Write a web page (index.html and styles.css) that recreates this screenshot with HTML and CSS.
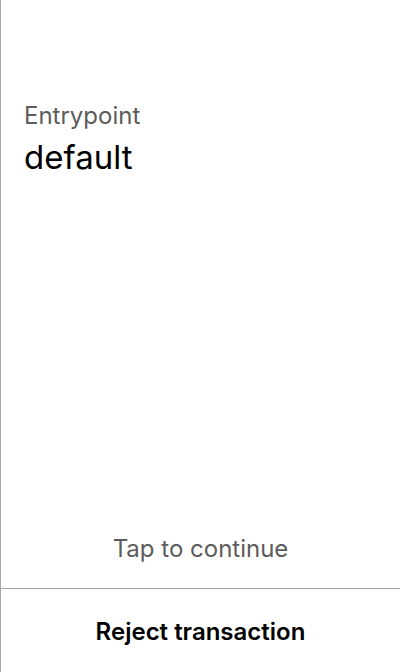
FILE: index.html
```html
<!DOCTYPE html>
<html>
<head>
<meta charset="utf-8">
<link rel="stylesheet" href="styles.css">
</head>
<body>
<div class="screen">
  <main class="content">
    <div class="field">
      <div class="label">Entrypoint</div>
      <div class="value">default</div>
    </div>
  </main>
  <div class="hint">Tap to continue</div>
  <div class="footer">
    <button class="reject">Reject transaction</button>
  </div>
</div>
</body>
</html>
```
FILE: styles.css
```css
html, body {
  margin: 0;
  padding: 0;
  background: #ffffff;
}
body {
  font-family: Inter, "Noto Sans", sans-serif;
}
.screen {
  height: 672px;
  box-sizing: border-box;
  border-left: 1px solid #a6a6a6;
  display: flex;
  flex-direction: column;
}
.content {
  flex: 1;
  padding: 100px 23px 0;
}
.label {
  font-size: 24px;
  color: #5c5c5c;
  line-height: 32px;
}
.value {
  font-size: 33px;
  color: #000;
  line-height: 40px;
  margin-top: 5px;
}
.hint {
  text-align: center;
  font-size: 24px;
  color: #5c5c5c;
  line-height: 32px;
  padding-bottom: 23px;
}
.footer {
  border-top: 1px solid #a6a6a6;
  height: 84px;
  box-sizing: border-box;
  padding-top: 2px;
  display: flex;
  align-items: center;
  justify-content: center;
}
.reject {
  background: none;
  border: none;
  font-family: Inter, "Noto Sans", sans-serif;
  font-size: 24px;
  font-weight: 600;
  color: #000;
  padding: 0;
}
```
